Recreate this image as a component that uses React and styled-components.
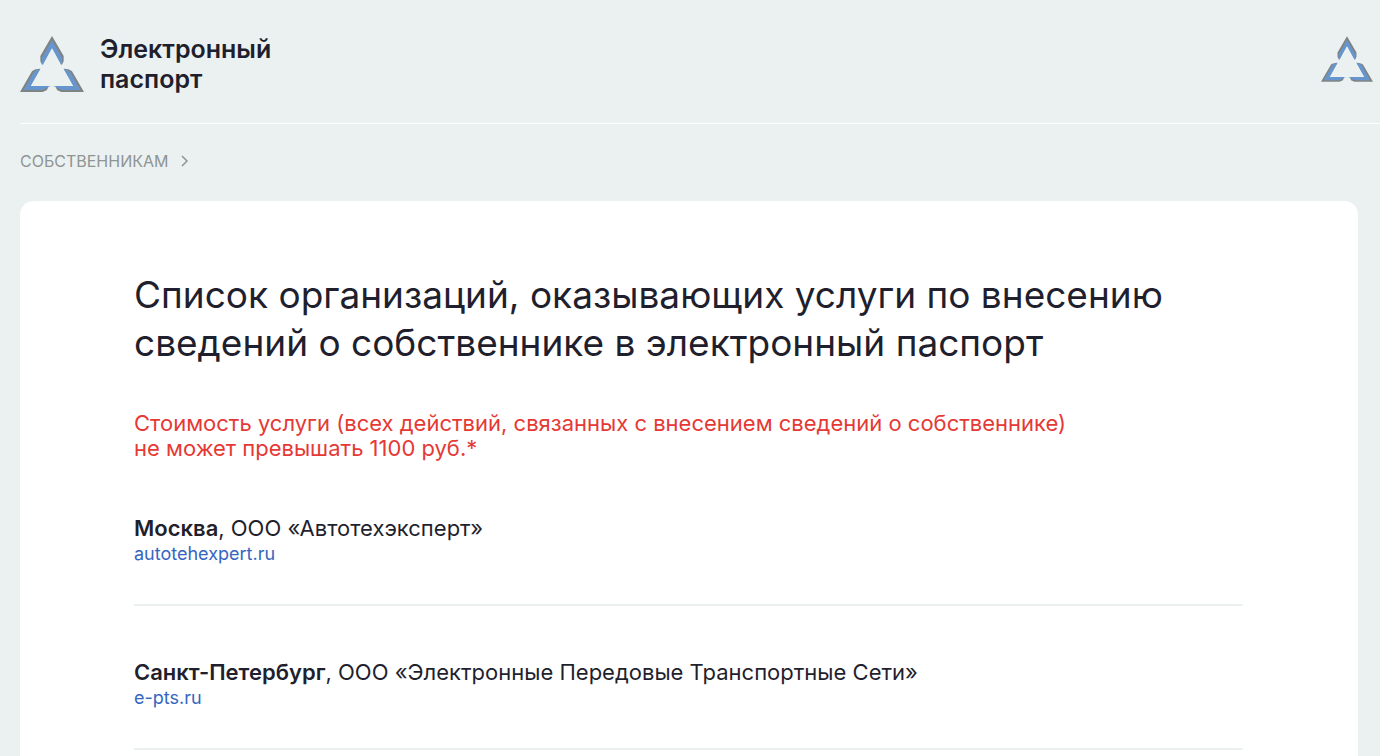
import React from "react";
import styled, { createGlobalStyle } from "styled-components";

const GlobalStyle = createGlobalStyle`
  body {
    margin: 0;
    background-color: #ebf1f1;
    color: #1f1f2e;
    font-family: Inter, "Liberation Sans", sans-serif;
  }
`;
const Page = styled.div`
  padding-left: 20px;
  height: 100vh;
  overflow: hidden;
`;
const Header = styled.header`
  display: flex;
  align-items: flex-start;
  justify-content: space-between;
  padding: 36px 7px 31px 0;
  border-bottom: 1px solid #ffffff;
`;
const Brand = styled.a`
  display: flex;
  align-items: center;
  gap: 16px;
  height: 56px;
  color: inherit;
  font-size: 25px;
  font-weight: 600;
  line-height: 30px;
  text-decoration: none;
`;
const LogoSvg = styled.svg`
  display: block;
  width: ${({ $small }) => ($small ? "52px" : "64px")};
  height: ${({ $small }) => ($small ? "46px" : "56px")};
`;
const Breadcrumbs = styled.nav`
  display: flex;
  align-items: center;
  gap: 12px;
  padding: 27px 0 29px;
  color: #8f9494;
  font-size: 16px;
  line-height: 21px;

  a {
    color: inherit;
    text-decoration: none;
  }
`;
const Card = styled.main`
  margin-right: 22px;
  padding: 70px 115px 70px 114px;
  border-radius: 14px;
  background-color: #ffffff;
`;
const Title = styled.h1`
  margin: 0;
  font-size: 37px;
  font-weight: 400;
  line-height: 48px;
`;
const Price = styled.p`
  margin: 44px 0 0;
  color: #e53935;
  font-size: 22px;
  line-height: 25px;
`;
const List = styled.ul`
  margin: 0;
  padding: 1px 0 0;
  list-style: none;
`;
const Item = styled.li`
  padding: 52px 0 38px;
  border-bottom: 2px solid #ebf1f1;
  font-size: 22px;
  line-height: 28px;
`;
const City = styled.b`
  font-weight: 600;
`;
const SiteLink = styled.a`
  display: table;
  color: #3566c0;
  font-size: 18px;
  line-height: 24px;
  text-decoration: none;
`;

const organizations = [
  { city: "Москва", name: "ООО «Автотехэксперт»", site: "autotehexpert.ru" },
  {
    city: "Санкт-Петербург",
    name: "ООО «Электронные Передовые Транспортные Сети»",
    site: "e-pts.ru",
  },
];

const Logo = ({ small }) => (
  <LogoSvg $small={small} viewBox="0 0 192 168" aria-hidden="true">
    <g fill="#7f8483">
      <path d="M96 0L131 60V76L126 86L96 34L66 86L61 76V60Z" />
      <path d="M0 168L36 106Q41 99 61 98L30 152H86L80 163L68 168Z" />
      <path d="M192 168L156 106Q151 99 131 98L162 152H106L112 163L124 168Z" />
    </g>
    <g fill="#6796cf">
      <path d="M96 13L127 67V81L124 88L96 36L68 88L65 81V67Z" />
      <path d="M11 162L40 110Q45 101 61 98L32 150H94Q84 151 78 157Q72 162 66 162Z" />
      <path d="M181 162L152 110Q147 101 131 98L160 150H98Q108 151 114 157Q120 162 126 162Z" />
    </g>
  </LogoSvg>
);

const App = () => {
  return (
    <>
      <GlobalStyle />
      <Page>
        <Header>
          <Brand href="#">
            <Logo />
            <span>
              Электронный
              <br />
              паспорт
            </span>
          </Brand>
          <a href="#" aria-label="Электронный паспорт">
            <Logo small />
          </a>
        </Header>
        <Breadcrumbs>
          <a href="#">СОБСТВЕННИКАМ</a>
          <svg width="10" height="14" viewBox="0 0 10 14" aria-hidden="true">
            <path
              d="M2 1L7 6L2 11"
              fill="none"
              stroke="#8f9494"
              strokeWidth="1.500"
            />
          </svg>
        </Breadcrumbs>
        <Card>
          <Title>
            Список организаций, оказывающих услуги по внесению
            <br />
            сведений о собственнике в электронный паспорт
          </Title>
          <Price>
            Стоимость услуги (всех действий, связанных с внесением сведений о
            собственнике)
            <br />
            не может превышать 1100 руб.*
          </Price>
          <List>
            {organizations.map(({ city, name, site }) => (
              <Item key={site}>
                <City>{city}</City>, {name}
                <SiteLink href={`https://${site}`}>{site}</SiteLink>
              </Item>
            ))}
          </List>
        </Card>
      </Page>
    </>
  );
};

export default App;
